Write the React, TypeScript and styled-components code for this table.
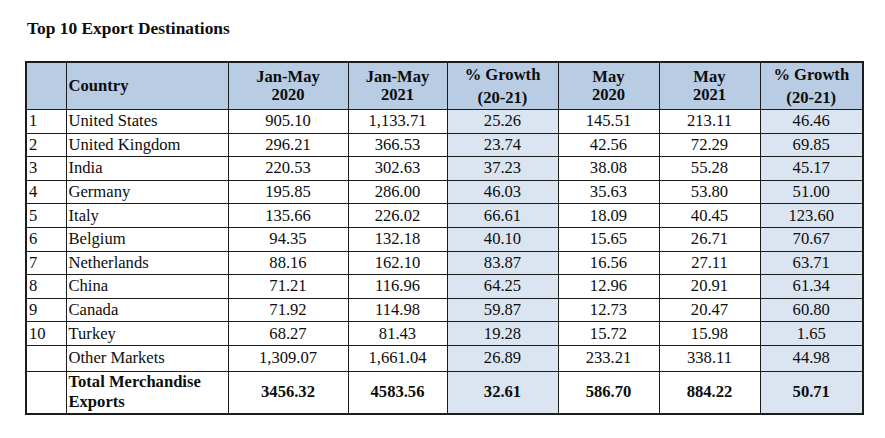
import styled, { createGlobalStyle } from 'styled-components';

type Row = {
  rank: string;
  country: string;
  values: string[];
};

const rows: Row[] = [
  { rank: '1', country: 'United States', values: ['905.10', '1,133.71', '25.26', '145.51', '213.11', '46.46'] },
  { rank: '2', country: 'United Kingdom', values: ['296.21', '366.53', '23.74', '42.56', '72.29', '69.85'] },
  { rank: '3', country: 'India', values: ['220.53', '302.63', '37.23', '38.08', '55.28', '45.17'] },
  { rank: '4', country: 'Germany', values: ['195.85', '286.00', '46.03', '35.63', '53.80', '51.00'] },
  { rank: '5', country: 'Italy', values: ['135.66', '226.02', '66.61', '18.09', '40.45', '123.60'] },
  { rank: '6', country: 'Belgium', values: ['94.35', '132.18', '40.10', '15.65', '26.71', '70.67'] },
  { rank: '7', country: 'Netherlands', values: ['88.16', '162.10', '83.87', '16.56', '27.11', '63.71'] },
  { rank: '8', country: 'China', values: ['71.21', '116.96', '64.25', '12.96', '20.91', '61.34'] },
  { rank: '9', country: 'Canada', values: ['71.92', '114.98', '59.87', '12.73', '20.47', '60.80'] },
  { rank: '10', country: 'Turkey', values: ['68.27', '81.43', '19.28', '15.72', '15.98', '1.65'] },
  { rank: '', country: 'Other Markets', values: ['1,309.07', '1,661.04', '26.89', '233.21', '338.11', '44.98'] },
];

const totals = ['3456.32', '4583.56', '32.61', '586.70', '884.22', '50.71'];

// columns that hold a % growth figure get the pale blue fill
const growthCols = [2, 5];
const colWidths = [40, 162, 120, 99, 111, 101, 101, 103];

const GlobalStyle = createGlobalStyle`
  body {
    margin: 0;
    background: #fff;
    font-family: "Liberation Serif", "Times New Roman", serif;
    color: #0d0d0d;
  }
`;

const Page = styled.div`
  padding: 18px 0 0 25px;
`;

const Title = styled.h1`
  margin: 0 0 23px 2px;
  font-size: 17.4px;
  line-height: 20px;
  font-weight: bold;
`;

const Table = styled.table`
  border-collapse: collapse;
  table-layout: fixed;
  width: 837px;
  border: 2px solid #1c1c1c;
  font-size: 16.6px;
`;

const HeadCell = styled.th<{ $left?: boolean; $tall?: boolean }>`
  height: 45px;
  padding: 0 2px;
  background: #b8cce4;
  border: 1px solid #1c1c1c;
  font-weight: bold;
  text-align: ${(p) => (p.$left ? 'left' : 'center')};
  line-height: ${(p) => (p.$tall ? '23px' : '18px')};
  vertical-align: middle;
`;

const Cell = styled.td<{ $tint?: boolean; $left?: boolean; $bold?: boolean; $h?: number }>`
  height: ${(p) => p.$h ?? 22.6}px;
  padding: 0 2px;
  border: 1px solid #1c1c1c;
  background: ${(p) => (p.$tint ? '#dbe5f1' : '#fff')};
  text-align: ${(p) => (p.$left ? 'left' : 'center')};
  font-weight: ${(p) => (p.$bold ? 'bold' : 'normal')};
  line-height: ${(p) => (p.$bold ? '20.5px' : '20px')};
  vertical-align: middle;
  white-space: nowrap;
`;

const WrapCell = styled(Cell)`
  white-space: normal;
`;

export default function App() {
  return (
    <Page>
      <GlobalStyle />
      <Title>Top 10 Export Destinations</Title>
      <Table>
        <colgroup>
          {colWidths.map((w, i) => (
            <col key={i} style={{ width: w }} />
          ))}
        </colgroup>
        <thead>
          <tr>
            <HeadCell />
            <HeadCell $left>Country</HeadCell>
            <HeadCell>Jan-May<br />2020</HeadCell>
            <HeadCell>Jan-May<br />2021</HeadCell>
            <HeadCell $tall>% Growth<br />(20-21)</HeadCell>
            <HeadCell>May<br />2020</HeadCell>
            <HeadCell>May<br />2021</HeadCell>
            <HeadCell $tall>% Growth<br />(20-21)</HeadCell>
          </tr>
        </thead>
        <tbody>
          {rows.map((r, ri) => (
            <tr key={r.country}>
              <Cell $left $h={ri === 10 ? 25 : 22.6}>{r.rank}</Cell>
              <Cell $left>{r.country}</Cell>
              {r.values.map((v, i) => (
                <Cell key={i} $tint={growthCols.includes(i)}>{v}</Cell>
              ))}
            </tr>
          ))}
          <tr>
            <Cell $h={41} />
            <WrapCell $left $bold>Total Merchandise Exports</WrapCell>
            {totals.map((v, i) => (
              <Cell key={i} $bold $tint={growthCols.includes(i)}>{v}</Cell>
            ))}
          </tr>
        </tbody>
      </Table>
    </Page>
  );
}
